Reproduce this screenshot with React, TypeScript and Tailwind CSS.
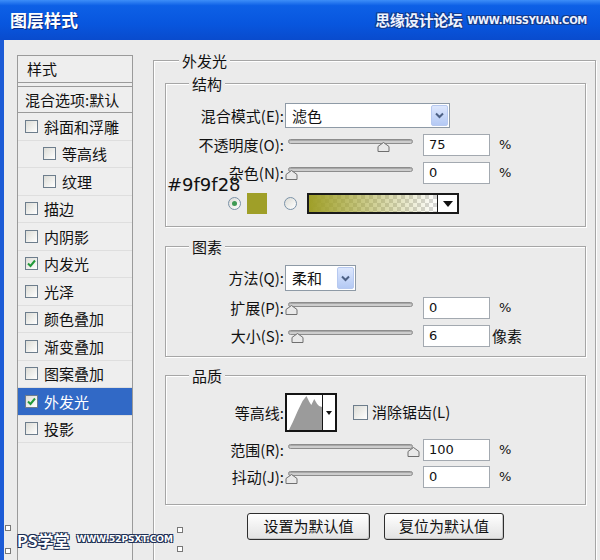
import React from "react";

interface StyleItem {
  label: string
  /** nested under 斜面和浮雕 */
  sub?: boolean
  checked?: boolean
  active?: boolean
}

const styleItems: StyleItem[] = [
  { label: "斜面和浮雕" },
  { label: "等高线", sub: true },
  { label: "纹理", sub: true },
  { label: "描边" },
  { label: "内阴影" },
  { label: "内发光", checked: true },
  { label: "光泽" },
  { label: "颜色叠加" },
  { label: "渐变叠加" },
  { label: "图案叠加" },
  { label: "外发光", checked: true, active: true },
  { label: "投影" },
];

const CheckBox = ({ checked, className = "" }: { checked?: boolean; className?: string }) => (
  <span
    className={`flex h-[13px] w-[13px] shrink-0 items-center justify-center border border-[#6d7d8c] bg-linear-to-br from-[#dcdcd6] to-white ${className}`}
  >
    {checked && (
      <svg width="9" height="9" viewBox="0 0 9 9">
        <path d="M1 4.5 L3.5 7 L8 1.5" fill="none" stroke="#239a3a" strokeWidth="2" />
      </svg>
    )}
  </span>
);

const Radio = ({ checked, className = "" }: { checked?: boolean; className?: string }) => (
  <span
    className={`flex h-[13px] w-[13px] shrink-0 items-center justify-center rounded-full border border-[#7a92a8] bg-linear-to-br from-[#dcdcd6] to-white ${className}`}
  >
    {checked && <span className="h-[5px] w-[5px] rounded-full bg-[#3e9a54]" />}
  </span>
);

const Chevron = () => (
  <svg width="9" height="7" viewBox="0 0 9 7">
    <path d="M1 1.5 L4.5 5 L8 1.5" fill="none" stroke="#4d6185" strokeWidth="2" />
  </svg>
);

const Select = ({ value, className = "" }: { value: string; className?: string }) => (
  <div className={`flex border border-[#8e9aa6] bg-white ${className}`}>
    <div className="flex-1 pl-[6px] text-[15px] leading-[23px]">{value}</div>
    <div className="m-[1px] flex w-[17px] items-center justify-center rounded-[2px] border border-[#b7c9f0] bg-linear-to-b from-[#dde7fd] to-[#b4c9f4]">
      <Chevron />
    </div>
  </div>
);

const Label = ({ children }: { children: React.ReactNode }) => (
  <div className="w-[118px] shrink-0 text-right text-[15px] leading-[22px]">{children}</div>
);

// thumb sits under the track, pct 0..1
const Slider = ({ pct }: { pct: number }) => (
  <div className="relative ml-[4px] h-[22px] w-[125px] shrink-0">
    <div className="mt-[5px] h-[5px] rounded-full border border-[#8c8c8c] bg-[#cdcdcd] shadow-[inset_0_1px_0_#a8a8a8]" />
    <svg
      className="absolute top-[8px]"
      style={{ left: -3 + pct * 122 }}
      width="13"
      height="10"
      viewBox="0 0 13 10"
    >
      <polygon points="1,9.5 1,4.5 6.5,0.5 12,4.5 12,9.5" fill="#e9e9e9" stroke="#6f6f6f" />
    </svg>
  </div>
);

const NumBox = ({ value }: { value: string }) => (
  <div className="ml-[10px] h-[22px] w-[67px] shrink-0 border border-[#a3a9b0] bg-white pl-[5px] font-['DejaVu_Sans',sans-serif] text-[13px] leading-[20px]">
    {value}
  </div>
);

const Group = ({
  title,
  titleClass,
  className = "",
  children,
}: {
  title: string
  titleClass: string
  className?: string
  children: React.ReactNode
}) => (
  <div className={`border border-[#a6a6a6] shadow-[inset_1px_1px_0_#fff,1px_1px_0_#fff] ${className}`}>
    <div className={`-mt-[10px] w-fit bg-[#ebebeb] px-[3px] text-[15px] leading-[19px] ${titleClass}`}>{title}</div>
    {children}
  </div>
);

const outline =
  "[text-shadow:-1px_-1px_0_#1d2f55,1px_-1px_0_#1d2f55,-1px_1px_0_#1d2f55,1px_1px_0_#1d2f55]";

const TitleBar = () => (
  <div className="flex h-[40px] items-center justify-between bg-[linear-gradient(#3d8ef8_0%,#0d60e6_14%,#0856de_60%,#094bcd_100%)] pl-[10px] pr-[13px]">
    <span className="text-[17px] font-bold text-white [text-shadow:1px_1px_0_#0a2a80]">图层样式</span>
    <div className="flex items-center gap-[5px] text-[#eef3ff]">
      <span className="text-[15px] font-bold tracking-[-0.5px] [text-shadow:-1px_-1px_0_#123a8c,1px_-1px_0_#123a8c,-1px_1px_0_#123a8c,1px_1px_0_#123a8c]">
        思缘设计论坛
      </span>
      <span className="font-['DejaVu_Sans',sans-serif] text-[10px] font-bold tracking-[-0.3px] [text-shadow:-1px_-1px_0_#123a8c,1px_-1px_0_#123a8c,-1px_1px_0_#123a8c,1px_1px_0_#123a8c]">
        WWW.MISSYUAN.COM
      </span>
    </div>
  </div>
);

const StylesPanel = () => (
  <div className="ml-[13px] mt-[15px] h-[510px] w-[116px] shrink-0 border border-[#9a9a9a] bg-[#eeeeee] text-[15px]">
    <div className="h-[27px] border-b border-[#9a9a9a] pl-[9px] leading-[26px]">样式</div>
    <div className="mt-[3px] h-[27px] border-y border-[#9a9a9a] pl-[7px] leading-[25px]">混合选项:默认</div>
    {styleItems.map((item) => (
      <div
        key={item.label}
        className={`flex h-[27.5px] items-center border-b border-[#dedede] ${
          item.active ? "bg-[#3169c6] text-white" : ""
        } ${item.sub ? "pl-[25px]" : "pl-[7px]"}`}
      >
        <CheckBox checked={item.checked} />
        <span className="ml-[6px] leading-none">{item.label}</span>
      </div>
    ))}
  </div>
);

const ContourThumb = () => (
  <div className="ml-[1px] flex h-[39px] w-[52px] shrink-0 border-2 border-[#141414] bg-white">
    <svg className="h-full flex-1" viewBox="0 0 36 35" preserveAspectRatio="none">
      <polygon
        points="2,35 6,27 11,16 16,6 20,1 23,7 25,10 28,4 31,9 33,11 36,12 36,35"
        fill="#9b9b9b"
      />
    </svg>
    <div className="flex w-[13px] items-center justify-center border-l border-[#141414]">
      <svg width="6" height="4" viewBox="0 0 6 4">
        <polygon points="0,0 6,0 3,4" fill="#111" />
      </svg>
    </div>
  </div>
);

const OuterGlowPanel = () => (
  <div className="ml-[20px] mt-[20px] h-[520px] w-[443px] shrink-0 border border-[#a6a6a6] pl-[11px] pr-[9px] shadow-[inset_1px_1px_0_#fff,1px_1px_0_#fff]">
    <div className="-mt-[10px] ml-[14px] w-fit bg-[#ebebeb] px-[3px] text-[15px] leading-[19px]">外发光</div>

    {/* 结构 */}
    <Group title="结构" titleClass="ml-[23px]" className="mt-[13px] h-[144px]">
      <div className="mt-[10px] flex items-center">
        <Label>混合模式(E):</Label>
        <Select value="滤色" className="ml-[1px] h-[25px] w-[165px]" />
      </div>
      <div className="mt-[6px] flex items-center">
        <Label>不透明度(O):</Label>
        <Slider pct={0.75} />
        <NumBox value="75" />
        <span className="ml-[9px] font-['DejaVu_Sans',sans-serif] text-[13px]">%</span>
      </div>
      <div className="mt-[6px] flex items-center">
        <Label>杂色(N):</Label>
        <Slider pct={0} />
        <NumBox value="0" />
        <span className="ml-[9px] font-['DejaVu_Sans',sans-serif] text-[13px]">%</span>
      </div>
      <div className="mt-[9px] flex h-[21px] items-center pl-[62px]">
        <Radio checked />
        <div className="ml-[6px] h-[21px] w-[20px] bg-[#9f9f28]" />
        <Radio className="ml-[17px]" />
        <div className="ml-[10px] flex h-[21px] w-[152px] border-2 border-[#1a1a1a]">
          <div className="flex-1 bg-[image:repeating-conic-gradient(#d8d8d8_0_25%,#ffffff_0_50%)] bg-[length:8px_8px]">
            <div className="h-full w-full bg-linear-to-r from-[#9f9f28] via-[#9f9f28]/50 to-transparent" />
          </div>
          <div className="flex w-[20px] items-center justify-center border-l border-[#1a1a1a] bg-white">
            <svg width="10" height="6" viewBox="0 0 10 6">
              <polygon points="0,0 10,0 5,6" fill="#111" />
            </svg>
          </div>
        </div>
      </div>
    </Group>

    {/* 图素 */}
    <Group title="图素" titleClass="ml-[23px]" className="mt-[19px] h-[111px]">
      <div className="mt-[9px] flex items-center">
        <Label>方法(Q):</Label>
        <Select value="柔和" className="ml-[1px] h-[26px] w-[71px]" />
      </div>
      <div className="mt-[6px] flex items-center">
        <Label>扩展(P):</Label>
        <Slider pct={0} />
        <NumBox value="0" />
        <span className="ml-[9px] font-['DejaVu_Sans',sans-serif] text-[13px]">%</span>
      </div>
      <div className="mt-[6px] flex items-center">
        <Label>大小(S):</Label>
        <Slider pct={0.05} />
        <NumBox value="6" />
        <span className="ml-[2px] text-[15px]">像素</span>
      </div>
    </Group>

    {/* 品质 */}
    <Group title="品质" titleClass="ml-[23px]" className="mt-[18px] h-[130px]">
      <div className="mt-[8px] flex items-center">
        <Label>等高线:</Label>
        <ContourThumb />
        <CheckBox className="ml-[16px] h-[15px] w-[15px]" />
        <span className="ml-[4px] text-[15px]">消除锯齿(L)</span>
      </div>
      <div className="mt-[7px] flex items-center">
        <Label>范围(R):</Label>
        <Slider pct={1} />
        <NumBox value="100" />
        <span className="ml-[9px] font-['DejaVu_Sans',sans-serif] text-[13px]">%</span>
      </div>
      <div className="mt-[5px] flex items-center">
        <Label>抖动(J):</Label>
        <Slider pct={0} />
        <NumBox value="0" />
        <span className="ml-[9px] font-['DejaVu_Sans',sans-serif] text-[13px]">%</span>
      </div>
    </Group>

    <div className="mt-[8px] flex justify-center gap-[14px]">
      <button className="h-[27px] w-[123px] rounded-[3px] border border-[#2e2e2e] bg-linear-to-b from-white to-[#e2e2e2] text-[15px] shadow-[inset_-1px_-1px_0_#c6c6c6]">
        设置为默认值
      </button>
      <button className="h-[27px] w-[120px] rounded-[3px] border border-[#2e2e2e] bg-linear-to-b from-white to-[#e2e2e2] text-[15px] shadow-[inset_-1px_-1px_0_#c6c6c6]">
        复位为默认值
      </button>
    </div>
  </div>
);

export default function App() {
  return (
    <div className="relative h-[560px] w-[600px] overflow-hidden bg-[#ebebeb] font-['Noto_Sans_CJK_SC',sans-serif] text-[#111]">
      <TitleBar />
      <div className="flex h-[520px]">
        <div className="w-[4px] shrink-0 bg-[#1c5bd6]" />
        <StylesPanel />
        <OuterGlowPanel />
      </div>

      {/* colour annotation */}
      <div className="absolute left-[167px] top-[176px] font-['DejaVu_Sans',sans-serif] text-[18px] leading-[18px] text-[#111]">
        #9f9f28
      </div>

      {/* watermark */}
      <div className="absolute left-[5px] top-[525px] flex h-[29px] w-[178px] items-center">
        <span className="absolute left-0 top-0 h-[6px] w-[6px] border border-[#777] bg-white" />
        <span className="absolute bottom-0 left-0 h-[6px] w-[6px] border border-[#777] bg-white" />
        <span className="absolute right-0 top-[2px] h-[6px] w-[6px] border border-[#777] bg-white" />
        <span className="absolute bottom-[2px] right-0 h-[6px] w-[6px] border border-[#777] bg-white" />
        <span className={`ml-[12px] text-[16px] font-bold text-white ${outline}`}>PS学堂</span>
        <span className={`ml-[7px] rounded-[2px] font-['DejaVu_Sans',sans-serif] text-[9px] font-bold text-white ${outline}`}>
          WWW.52PSXT.COM
        </span>
      </div>
    </div>
  );
}
